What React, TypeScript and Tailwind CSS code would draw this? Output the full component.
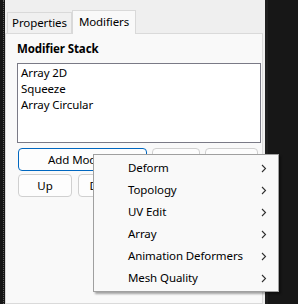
import React from 'react';

const menuItems = ['Deform', 'Topology', 'UV Edit', 'Array', 'Animation Deformers', 'Mesh Quality'];
const stack = ['Array 2D', 'Squeeze', 'Array Circular'];

const Chevron: React.FC = () => (
  <svg width="6" height="9" viewBox="0 0 6 9" className="shrink-0">
    <path d="M1 1 L4.5 4.5 L1 8" fill="none" stroke="#303030" strokeWidth="1.1" />
  </svg>
);

const Btn: React.FC<{ w: string; label?: string; focused?: boolean }> = ({ w, label, focused }) => (
  <div
    className={`${w} h-[23px] rounded-[4px] border flex items-center justify-center text-[11.5px] text-black ${
      focused ? 'border-[#0067c0] bg-[#fdfdfd]' : 'border-[#d0d0d0] bg-[#fdfdfd]'
    }`}
  >
    {label}
  </div>
);

export default function App() {
  return (
    <div
      className="relative w-[298px] h-[304px] overflow-hidden bg-[#efefef] flex tracking-[-0.1px]"
      style={{ fontFamily: '"Noto Sans", "Open Sans", sans-serif' }}
    >
      {/* left dark strip */}
      <div className="w-[5px] h-full bg-[#161616] flex justify-center">
        <div className="w-0 h-full border-l border-dotted border-[#5a5a5a] ml-[1px]" />
      </div>

      {/* tab widget */}
      <div className="w-[258px] flex flex-col">
        <div className="h-[33px] flex items-end pl-[2px]">
          <div className="h-[21px] w-[65px] border border-b-0 border-[#d9d9d9] bg-[#f0f0f0] flex items-center justify-center text-[11.5px] text-black">
            Properties
          </div>
          <div className="h-[24px] w-[64px] border border-b-0 border-[#d9d9d9] bg-[#f9f9f9] -mb-px relative z-10 flex items-center justify-center text-[11.5px] text-black pb-[2px]">
            Modifiers
          </div>
        </div>
        <div className="flex-1 border border-[#dadada] bg-[#f9f9f9] pl-[11px] pt-[7px]">
          <div className="text-[11.5px] font-bold text-black leading-[16px]">Modifier Stack</div>
          <div className="mt-[6px] w-[244px] h-[80px] border border-[#7a7a86] bg-white pl-[3px] pt-[1px]">
            {stack.map((s) => (
              <div key={s} className="text-[11.5px] leading-[16px] text-black">
                {s}
              </div>
            ))}
          </div>
          <div className="mt-[5px] pl-px flex gap-[5px]">
            <Btn w="w-[129px]" label="Add Modifier" focused />
            <Btn w="w-[48px]" />
            <Btn w="w-[53px]" />
          </div>
          <div className="mt-[3px] pl-px flex gap-[6px]">
            <Btn w="w-[54px]" label="Up" />
            <Btn w="w-[54px]" label="Down" />
            <Btn w="w-[54px]" />
          </div>
        </div>
      </div>

      <div className="w-[2px]" />

      {/* right dark panel */}
      <div className="flex-1 h-full bg-[#171717] border-l-[3px] border-[#1f1f1f]" />

      {/* context submenu */}
      <div className="absolute left-[93px] top-[154px] w-[186px] h-[138px] bg-[#f9f9f9] border border-[#a0a0a0] shadow-[2px_2px_2px_rgba(0,0,0,0.35)] pt-[2px]">
        {menuItems.map((m) => (
          <div key={m} className="h-[22px] flex items-center pl-[34px] pr-[11px] text-[11.5px] text-black">
            <span className="flex-1">{m}</span>
            <Chevron />
          </div>
        ))}
      </div>
    </div>
  );
}
